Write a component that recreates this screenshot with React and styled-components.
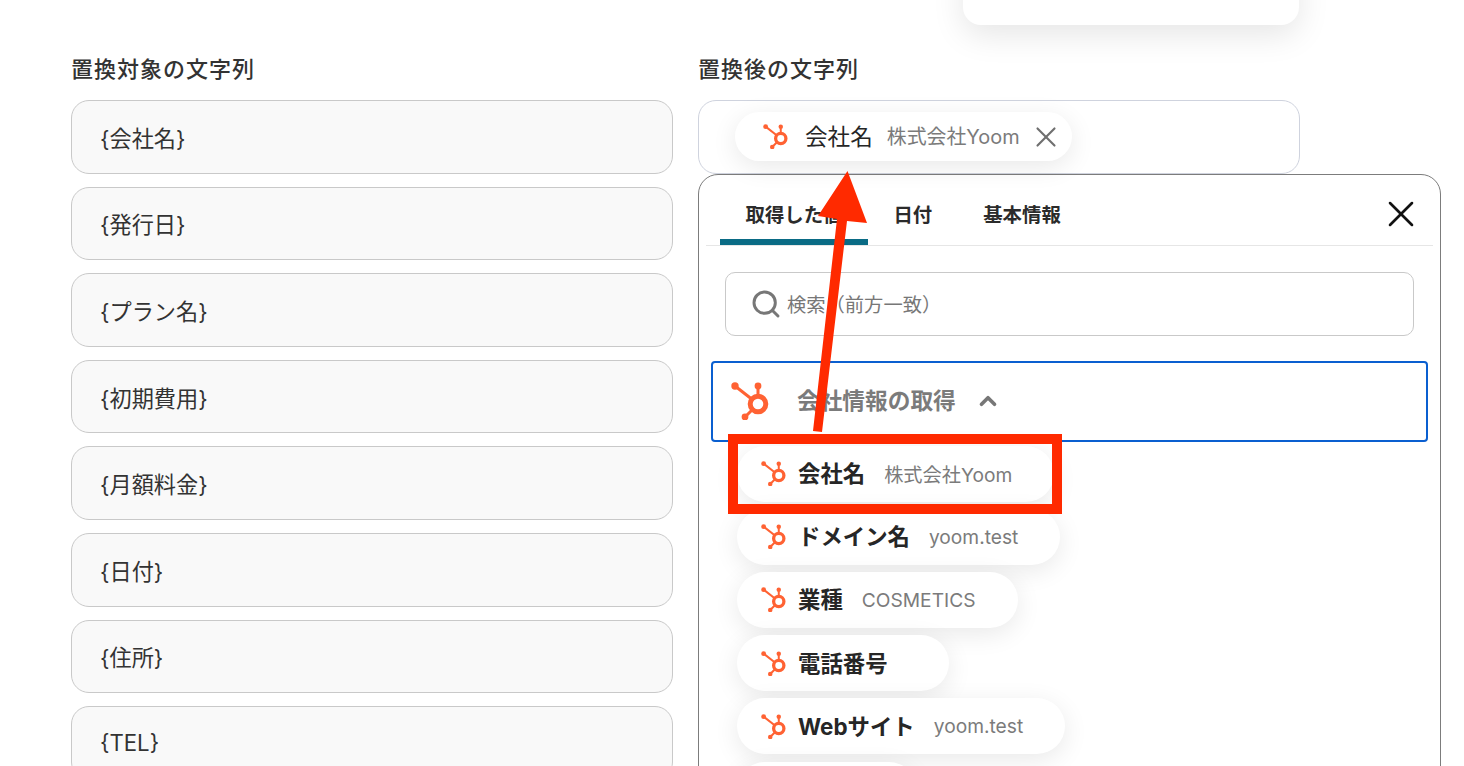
import styled, { createGlobalStyle } from "styled-components";
import { Search, X, ChevronUp } from "lucide-react";

const GlobalStyle = createGlobalStyle`
  html, body {
    margin: 0;
    background: #fff;
    font-family: Inter, "Noto Sans CJK JP", "Noto Sans", sans-serif;
    color: #2b2b2b;
  }
`;

const Page = styled.div`
  position: relative;
  height: 766px;
  overflow: hidden;
  display: flex;
  gap: 25px;
  box-sizing: border-box;
  padding: 53px 0 0 71px;
`;

const Column = styled.div`
  width: 602px;
  flex: none;
`;

const RightColumn = styled(Column)`
  width: 743px;
`;

const Label = styled.div`
  font-size: 22px;
  font-weight: 500;
  line-height: 32px;
  margin-bottom: 15px;
  color: #333;
  letter-spacing: 1px;
`;

const Rows = styled.div`
  display: flex;
  flex-direction: column;
  gap: 13px;
`;

const Field = styled.div`
  box-sizing: border-box;
  height: 73.6px;
  width: 602px;
  flex: none;
  border: 1px solid #c9c9c9;
  border-radius: 18px;
  background: #f9f9f9;
  display: flex;
  align-items: center;
  padding-left: 28px;
  font-size: 22.2px;
  color: #333;
`;

const TargetField = styled(Field)`
  background: #fff;
  border-color: #cfd3de;
  padding-left: 36px;
`;

const Chip = styled.div`
  display: inline-flex;
  align-items: center;
  align-self: flex-start;
  height: 56px;
  flex: none;
  box-sizing: border-box;
  padding: 0 42px 0 24px;
  border-radius: 28px;
  background: #fff;
  box-shadow: 0 6px 26px rgba(0, 0, 0, 0.09);
`;

const PickedChip = styled(Chip)`
  height: 49px;
  padding: 0 9px 0 28px;
  border-radius: 25px;
  align-self: center;
`;

const BlankChip = styled(Chip)`
  width: 180px;
`;

const ChipName = styled.span`
  margin-left: ${(p) => (p.$picked ? "17px" : "12px")};
  padding-bottom: 3px;
  font-size: ${(p) => (p.$picked ? "22.6px" : "22.4px")};
  font-weight: ${(p) => (p.$picked ? 400 : 700)};
  color: #262626;
  white-space: nowrap;
`;

const ChipValue = styled.span`
  margin-left: ${(p) => (p.$picked ? "14px" : "19px")};
  padding-bottom: ${(p) => (p.$picked ? "2px" : "0")};
  font-size: ${(p) => (p.$picked ? "19.9px" : "19.2px")};
  color: #7b7b7b;
  white-space: nowrap;
`;

const ChipClose = styled(X)`
  margin-left: 9px;
  color: #6f6f6f;
`;

const Popover = styled.div`
  box-sizing: border-box;
  width: 743px;
  height: 640px;
  background: #fff;
  border: 1px solid #7c7c7c;
  border-radius: 20px;
`;

const TabBar = styled.div`
  height: 71px;
  margin: 0 7px;
  padding-left: 14px;
  box-sizing: border-box;
  border-bottom: 1px solid #e6e6e6;
  display: flex;
  align-items: stretch;
`;

const Tab = styled.div`
  padding: 14px 25.5px 0;
  display: flex;
  align-items: center;
  box-sizing: border-box;
  font-size: 19.4px;
  font-weight: 700;
  color: #2b2b2b;
  border-bottom: 6px solid ${(p) => (p.$active ? "#0a6b85" : "transparent")};
  border-radius: 6px 6px 0 0;
`;

const CloseButton = styled.div`
  margin: 9px 10px 0 auto;
  display: flex;
  align-items: center;
  color: #111;
`;

const SearchBox = styled.div`
  margin: 26px 26px 0 26px;
  height: 64px;
  box-sizing: border-box;
  border: 1px solid #c9c9c9;
  border-radius: 10px;
  display: flex;
  align-items: center;
  padding-left: 24px;
  color: #777;
  font-size: 19.3px;
  gap: 5px;
`;

const Section = styled.div`
  margin: 25px 12px 0;
  height: 81px;
  box-sizing: border-box;
  border: 2px solid #0a5fd0;
  border-radius: 4px;
  display: flex;
  align-items: center;
  padding-left: 18px;
`;

const SectionTitle = styled.span`
  margin-left: 28px;
  padding-bottom: 4px;
  font-size: 22.7px;
  font-weight: 700;
  color: #7b7b7b;
`;

const SectionChevron = styled(ChevronUp)`
  margin-left: 19px;
  color: #777;
`;

const ChipList = styled.div`
  margin: 4px 0 0 38px;
  display: flex;
  flex-direction: column;
  gap: 7.2px;
`;

const TopCard = styled.div`
  position: absolute;
  left: 963px;
  top: -40px;
  width: 336px;
  height: 65px;
  border-radius: 18px;
  background: #fff;
  box-shadow: 0 10px 32px rgba(0, 0, 0, 0.1);
`;

const Highlight = styled.div`
  position: absolute;
  left: 728px;
  top: 434px;
  width: 334px;
  height: 80px;
  box-sizing: border-box;
  border: 10px solid #ff2a00;
`;

const Arrow = styled.svg`
  position: absolute;
  left: 810px;
  top: 165px;
`;

function HubspotIcon({ size }) {
  return (
    <svg width={size} height={size} viewBox="0 0 38 38" fill="none" style={{ flex: "none" }}>
      <path d="M4 4 L27 22 M27 4 V22 M14 35 L27 22" stroke="#ff6233" strokeWidth="3" />
      <circle cx="4" cy="4" r="3.7" fill="#ff6233" />
      <circle cx="27" cy="4" r="3.4" fill="#ff6233" />
      <circle cx="14" cy="35" r="3.4" fill="#ff6233" />
      <circle cx="27" cy="22" r="7.8" fill="#fff" stroke="#ff6233" strokeWidth="5" />
    </svg>
  );
}

const sources = ["{会社名}", "{発行日}", "{プラン名}", "{初期費用}", "{月額料金}", "{日付}", "{住所}", "{TEL}"];

const outputs = [
  { name: "会社名", value: "株式会社Yoom" },
  { name: "ドメイン名", value: "yoom.test" },
  { name: "業種", value: "COSMETICS" },
  { name: "電話番号", value: "" },
  { name: "Webサイト", value: "yoom.test" },
];

export default function App() {
  return (
    <>
      <GlobalStyle />
      <Page>
        <TopCard />
        <Column>
          <Label>置換対象の文字列</Label>
          <Rows>
            {sources.map((s) => (
              <Field key={s}>{s}</Field>
            ))}
          </Rows>
        </Column>
        <RightColumn>
          <Label>置換後の文字列</Label>
          <TargetField>
            <PickedChip>
              <HubspotIcon size={25} />
              <ChipName $picked>会社名</ChipName>
              <ChipValue $picked>株式会社Yoom</ChipValue>
              <ChipClose size={34} strokeWidth={1.5} />
            </PickedChip>
          </TargetField>
          <Popover>
            <TabBar>
              <Tab $active>取得した値</Tab>
              <Tab>日付</Tab>
              <Tab>基本情報</Tab>
              <CloseButton>
                <X size={44} strokeWidth={1.4} />
              </CloseButton>
            </TabBar>
            <SearchBox>
              <Search size={32} strokeWidth={2.2} />
              <span>検索（前方一致）</span>
            </SearchBox>
            <Section>
              <HubspotIcon size={38} />
              <SectionTitle>会社情報の取得</SectionTitle>
              <SectionChevron size={26} strokeWidth={3.4} />
            </Section>
            <ChipList>
              {outputs.map((o) => (
                <Chip key={o.name}>
                  <HubspotIcon size={25} />
                  <ChipName>{o.name}</ChipName>
                  <ChipValue>{o.value}</ChipValue>
                </Chip>
              ))}
              <BlankChip />
            </ChipList>
          </Popover>
        </RightColumn>
        <Highlight />
        <Arrow width="60" height="270" viewBox="0 0 60 270">
          <path
            d="M37.5 6 L8 51 L27 54 L3 266 L12 267 L37 56 L57 58 Z"
            fill="#ff2a00"
          />
        </Arrow>
      </Page>
    </>
  );
}
